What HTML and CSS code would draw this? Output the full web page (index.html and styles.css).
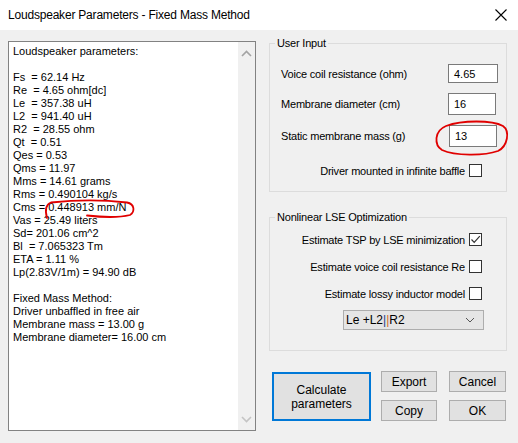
FILE: index.html
```html
<!DOCTYPE html>
<html>
<head>
<meta charset="utf-8">
<link rel="stylesheet" href="styles.css">
</head>
<body>
<div class="window">
  <div class="titlebar">
    <span class="title">Loudspeaker Parameters - Fixed Mass Method</span>
    <svg class="close" width="12" height="12" viewBox="0 0 12 12"><path d="M0.5 0.5 L11.5 11.5 M11.5 0.5 L0.5 11.5" stroke="#000" stroke-width="1.1" fill="none"/></svg>
  </div>
  <div class="content">
    <div class="textbox">
      <div class="text">
        <div>Loudspeaker parameters:</div>
        <div>&nbsp;</div>
        <div>Fs &nbsp;= 62.14 Hz</div>
        <div>Re &nbsp;= 4.65 ohm[dc]</div>
        <div>Le &nbsp;= 357.38 uH</div>
        <div>L2 &nbsp;= 941.40 uH</div>
        <div>R2 &nbsp;= 28.55 ohm</div>
        <div>Qt &nbsp;= 0.51</div>
        <div>Qes = 0.53</div>
        <div>Qms = 11.97</div>
        <div>Mms = 14.61 grams</div>
        <div>Rms = 0.490104 kg/s</div>
        <div>Cms = 0.448913 mm/N</div>
        <div>Vas = 25.49 liters</div>
        <div>Sd= 201.06 cm^2</div>
        <div>Bl &nbsp;= 7.065323 Tm</div>
        <div>ETA = 1.11 %</div>
        <div>Lp(2.83V/1m) = 94.90 dB</div>
        <div>&nbsp;</div>
        <div>Fixed Mass Method:</div>
        <div>Driver unbaffled in free air</div>
        <div>Membrane mass = 13.00 g</div>
        <div>Membrane diameter= 16.00 cm</div>
      </div>
      <div class="scrollbar">
        <svg width="11" height="7" viewBox="0 0 11 7"><path d="M1 6 L5.5 1.5 L10 6" stroke="#a3a3a3" stroke-width="1.6" fill="none"/></svg>
        <svg width="11" height="7" viewBox="0 0 11 7"><path d="M1 1 L5.5 5.5 L10 1" stroke="#c4c4c4" stroke-width="1.6" fill="none"/></svg>
      </div>
    </div>
    <div class="right">
      <fieldset class="group group1">
        <legend>User Input</legend>
        <div class="row r1"><span>Voice coil resistance (ohm)</span><div class="input i1">4.65</div></div>
        <div class="row r2"><span>Membrane diameter (cm)</span><div class="input i2">16</div></div>
        <div class="row r3"><span>Static membrane mass (g)</span><div class="input i3">13</div></div>
        <div class="check-row c0"><span>Driver mounted in infinite baffle</span><div class="checkbox"></div></div>
      </fieldset>
      <fieldset class="group group2">
        <legend>Nonlinear LSE Optimization</legend>
        <div class="check-row c1"><span>Estimate TSP by LSE minimization</span><div class="checkbox checked"><svg width="11" height="11" viewBox="0 0 11 11"><path d="M1.5 5.5 L4.2 8.3 L9.8 2.2" stroke="#333" stroke-width="1.2" fill="none"/></svg></div></div>
        <div class="check-row c2"><span>Estimate voice coil resistance Re</span><div class="checkbox"></div></div>
        <div class="check-row c3"><span>Estimate lossy inductor model</span><div class="checkbox"></div></div>
        <div class="select"><span>Le +L2<span class="p1">|</span><span class="p2">|</span>R2</span><svg width="10" height="6" viewBox="0 0 10 6"><path d="M1 1 L5 5 L9 1" stroke="#555" stroke-width="1" fill="none"/></svg></div>
      </fieldset>
      <div class="buttons">
        <div class="btn calc">Calculate<br>parameters</div>
        <div class="btn-col">
          <div class="btn small">Export</div>
          <div class="btn small">Copy</div>
        </div>
        <div class="btn-col last">
          <div class="btn small wide">Cancel</div>
          <div class="btn small wide">OK</div>
        </div>
      </div>
    </div>
  </div>
  <svg class="marks" width="518" height="443" viewBox="0 0 518 443">
    <path d="M47 218 C45 211 45 205 51 202.5 C75 200 105 200 127 202.5 C135 204 135 212 130 215 C118 218 100 217 87 215.5" stroke="#e00000" stroke-width="1.8" fill="none" stroke-linecap="round"/>
    <path d="M446 126 C462 120 492 120 503 126 C510 131 508 146 498 151 C484 156 455 156 442 150 C434 145 434 131 446 126 Z" stroke="#e00000" stroke-width="1.8" fill="none"/>
  </svg>
</div>
</body>
</html>
```
FILE: styles.css
```css
* { box-sizing: border-box; }
body { margin: 0; }
.window {
  position: relative;
  width: 518px;
  height: 443px;
  background: #f0f0f0;
  font-family: "Liberation Sans", Arial, sans-serif;
  font-size: 11px;
  color: #000;
  overflow: hidden;
}
.titlebar {
  height: 30px;
  background: #fff;
  display: flex;
  align-items: center;
  justify-content: space-between;
  padding: 0 11px 0 8px;
}
.title { font-size: 12px; letter-spacing: -0.2px; }
.content {
  display: flex;
  align-items: flex-start;
  padding: 7px 0 0 8px;
}
.textbox {
  margin-top: 4px;
  width: 248px;
  height: 390px;
  background: #fff;
  border: 1px solid #828282;
  display: flex;
}
.text {
  flex: 1;
  padding: 3px 0 0 4px;
  line-height: 13px;
  white-space: nowrap;
}
.scrollbar {
  width: 17px;
  background: #f0f0f0;
  display: flex;
  flex-direction: column;
  justify-content: space-between;
  align-items: center;
  padding: 8px 0 7px;
}
.right {
  margin-left: 13px;
  width: 238px;
  letter-spacing: -0.2px;
}
.group {
  margin: 0;
  border: 1px solid #dcdcdc;
  min-width: 0;
}
.group legend {
  padding: 0 2px;
  margin-left: -6px;
  line-height: 13px;
}
.group1 {
  height: 155px;
  padding: 0 8px 0 11px;
}
.row {
  display: flex;
  align-items: center;
  justify-content: space-between;
}
.r1 { margin-top: 14px; height: 19px; }
.r2 { margin-top: 10px; height: 22px; }
.r3 { margin-top: 10px; height: 22px; }
.input {
  background: #fff;
  border: 1px solid #7a7a7a;
  height: 100%;
  display: flex;
  align-items: center;
  padding-left: 5px;
  letter-spacing: 0;
}
.i1 { width: 50px; }
.i2 { width: 48px; margin-right: 2px; }
.i3 { width: 48px; margin-right: 1px; }
.check-row {
  display: flex;
  align-items: center;
  justify-content: flex-end;
  gap: 4px;
  height: 13px;
}
.group1 .check-row { margin-top: 17px; padding-right: 16px; }
.checkbox {
  width: 13px;
  height: 13px;
  background: #fff;
  border: 1px solid #333;
  display: flex;
  align-items: center;
  justify-content: center;
}
.group2 {
  margin-top: 19px;
  height: 140px;
  padding: 0 24px 0 11px;
}
.c1 { margin-top: 9px; }
.c2, .c3 { margin-top: 14px; }
.select {
  margin: 10px -2px 0 62px;
  height: 20px;
  background: #e5e5e5;
  border: 1px solid #adadad;
  display: flex;
  align-items: center;
  justify-content: space-between;
  padding: 0 8px 0 2px;
  font-size: 12px;
  letter-spacing: 0;
}
.p1 { color: #1a3a8a; }
.p2 { color: #d2691e; }
.buttons {
  display: flex;
  margin-top: 20px;
  padding-left: 3px;
  letter-spacing: 0;
}
.btn {
  background: #e1e1e1;
  border: 1px solid #adadad;
  display: flex;
  align-items: center;
  justify-content: center;
  text-align: center;
  font-size: 12px;
}
.calc {
  width: 99px;
  height: 49px;
  margin-top: 1px;
  border: 2px solid #0078d7;
  line-height: 14px;
}
.btn-col {
  display: flex;
  flex-direction: column;
  gap: 8px;
  margin-left: 10px;
}
.btn-col.last { margin-left: 12px; }
.small { width: 56px; height: 21px; }
.wide { width: 57px; }
.marks {
  position: absolute;
  left: 0;
  top: 0;
  pointer-events: none;
}
```
